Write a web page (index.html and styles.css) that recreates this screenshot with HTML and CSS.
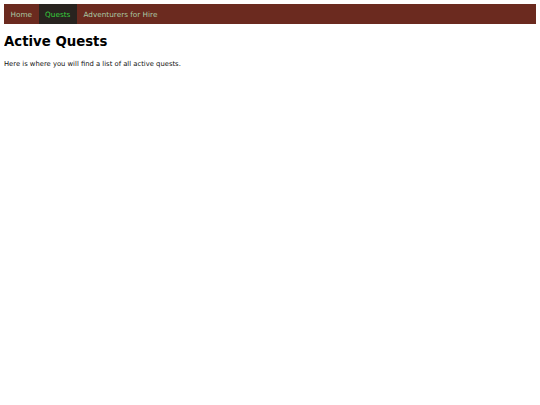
FILE: index.html
```html
<!DOCTYPE html>
<html>
<head>
<meta charset="utf-8">
<link rel="stylesheet" href="styles.css">
</head>
<body>
<nav class="nav">
  <a class="nav-item" href="#">Home</a>
  <a class="nav-item active" href="#">Quests</a>
  <a class="nav-item" href="#">Adventurers for Hire</a>
</nav>
<h1 class="title">Active Quests</h1>
<p class="intro">Here is where you will find a list of all active quests.</p>
</body>
</html>
```
FILE: styles.css
```css
body {
  margin: 4px;
  font-family: "DejaVu Sans", Verdana, sans-serif;
  background: #fff;
  color: #000;
}
.nav {
  display: flex;
  background: #6b2a1f;
  height: 20px;
}
.nav-item {
  display: flex;
  align-items: center;
  padding: 0 6.5px;
  font-size: 7.3px;
  color: #a9c8a2;
  text-decoration: none;
}
.nav-item.active {
  background: #28231f;
  color: #36cf3c;
}
.title {
  font-size: 13.3px;
  margin: 10px 0 11px;
}
.intro {
  font-size: 6.8px;
  margin: 0;
  color: #111;
}
```
